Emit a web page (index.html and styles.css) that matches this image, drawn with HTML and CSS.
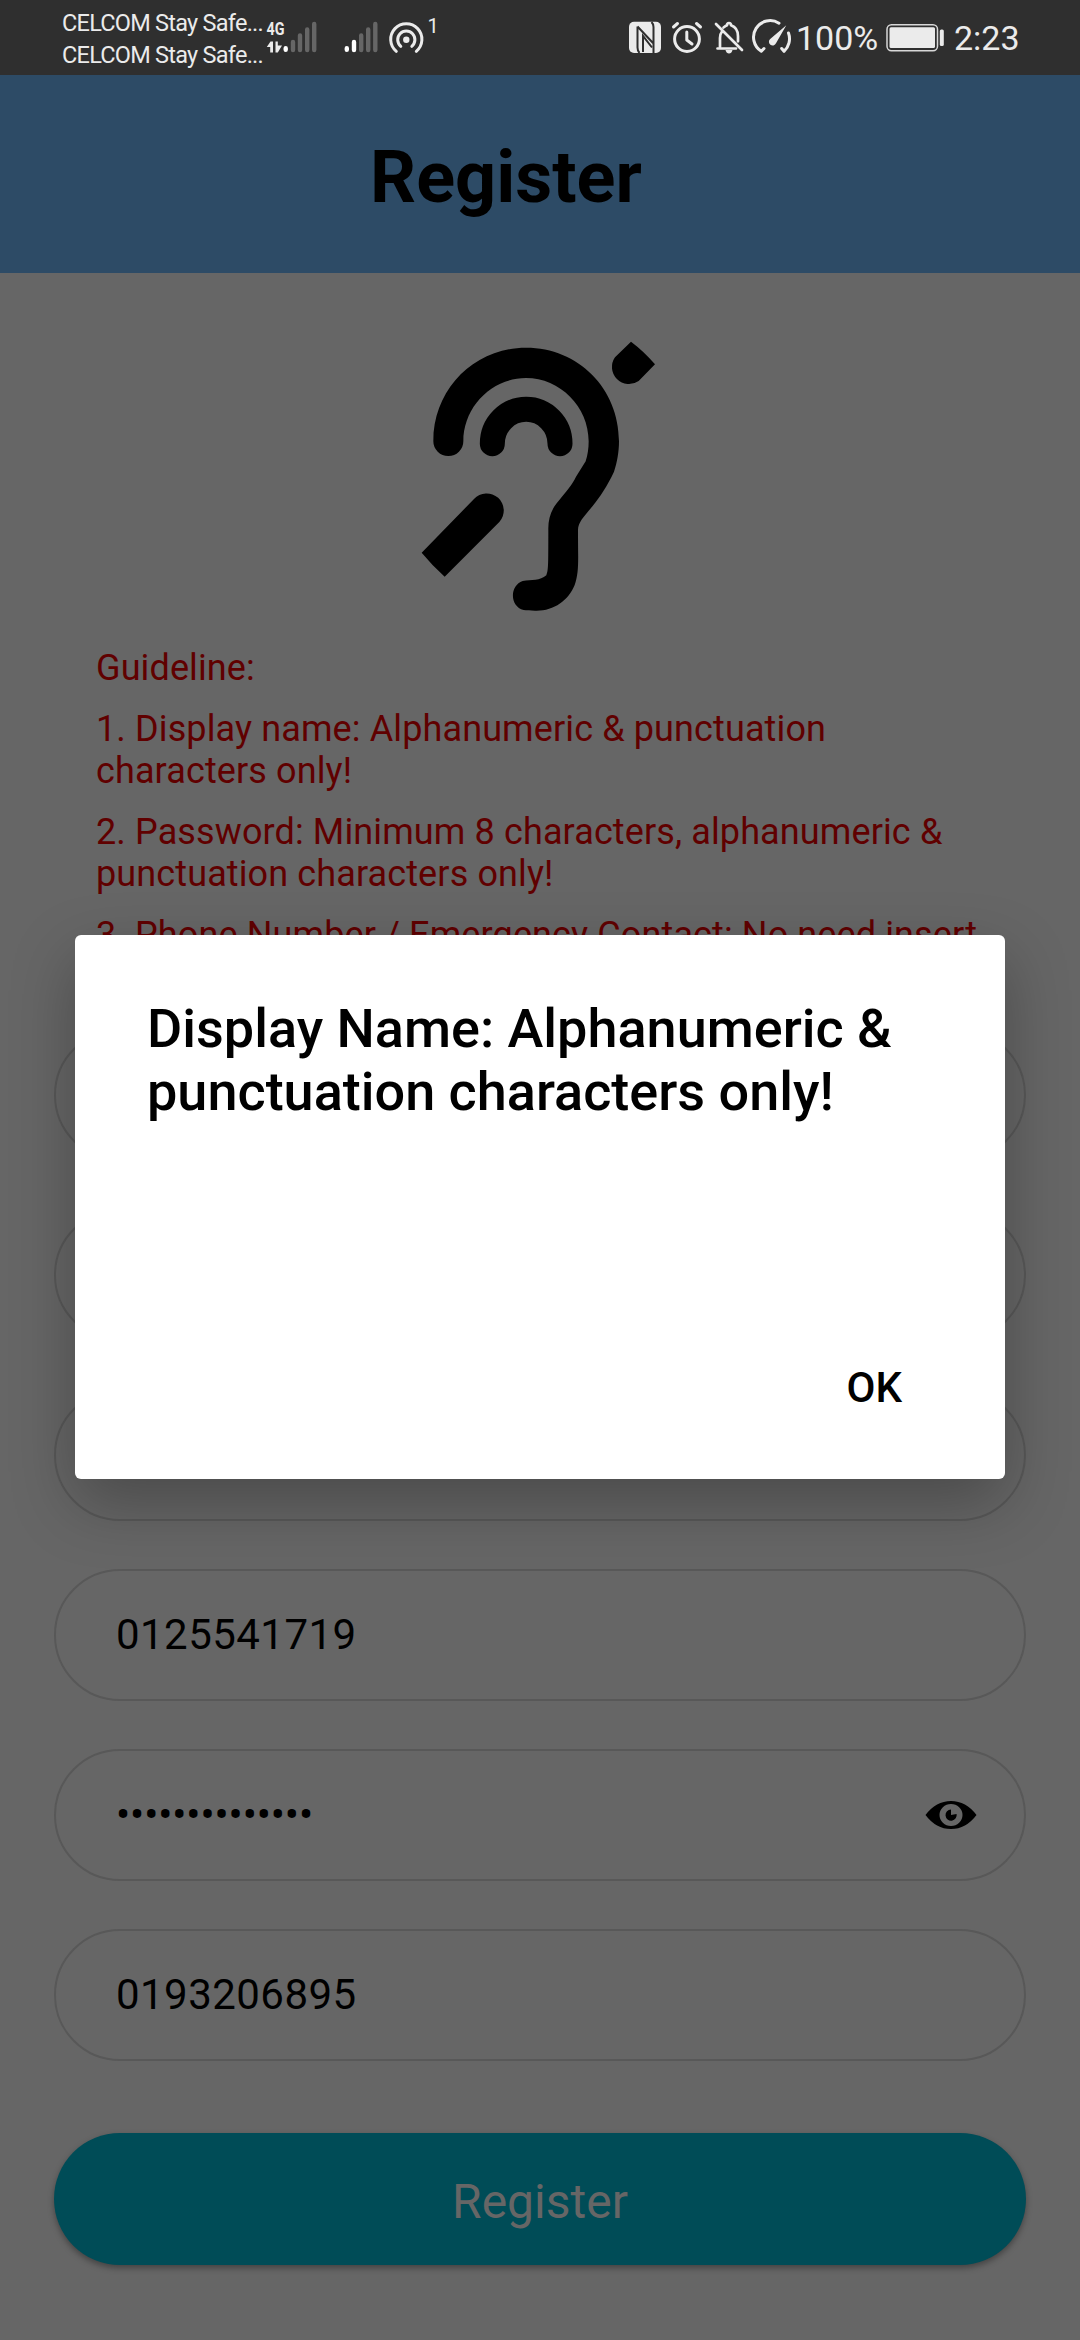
FILE: index.html
```html
<!DOCTYPE html>
<html lang="en">
<head>
<meta charset="utf-8">
<title>Register</title>
<link rel="stylesheet" href="styles.css">
</head>
<body>
<div class="screen">
  <div class="status">
    <div class="carriers"><div>CELCOM Stay Safe...</div><div>CELCOM Stay Safe...</div></div>
    <svg class="signals" width="180" height="75" viewBox="264 0 180 75">
      <text x="266.5" y="35.300" class="net" textLength="18" lengthAdjust="spacingAndGlyphs">4G</text>
      <path class="fill" d="M270.500 41.500h2.500v11h-2.800v-5.500h-3.400zM275.500 41.500h2.300v4h4.200l-4.200 7h-2.300z"/>
      <g class="bar"><path d="M285.700 48.200v1.600M346.800 48.200v1.600M354 42v8"/></g>
      <g class="bar dim"><path d="M293 42v8M300 35.500v14.500M307.200 29.500v20.500M314.200 24v26M361.200 35.500v14.500M368.200 29.500v20.500M375.300 24v26"/></g>
      <circle class="fill" cx="406.300" cy="39.700" r="3.200"/>
      <path class="line" d="M396.300 51.300a15.600 15.600 0 1 1 20 0M400.800 46.300a8.600 8.600 0 1 1 11 0"/>
      <text x="427.500" y="33" class="one">1</text>
    </svg>
    <svg class="icons" width="167" height="75" viewBox="628 0 167 75">
      <rect class="fill" x="629" y="21.700" width="32" height="31.300" rx="5"/>
      <path d="M637.500 26.500v21q0 3.500 2 5.500M637.500 26.500l15.500 16.500M651.500 22q2 2 2 5v26" fill="none" stroke="#2f2f2f" stroke-width="2"/>
      <path d="M643 52v-16l9 11.500" fill="none" stroke="#2f2f2f" stroke-width="2"/>
      <circle class="line" cx="687" cy="39" r="12.400"/>
      <path class="line" d="M686.800 32v8l5.200 4M673.500 27l4-3.500M700.500 27l-4-3.500"/>
      <path class="line thin" d="M716 24l26 26M717.500 48.500h18.500M720 47v-9q0-4 2-6.500M723.500 27.500q2-1.500 3.500-2.200 0-2.300 2-2.300t2 2.300q7 2.400 7 11v5"/>
      <path class="fill" d="M725.500 50h7q-1 3.500-3.500 3.500t-3.500-3.500z"/>
      <path class="line" d="M764 48.500l-2.700 2.800A16.600 16.600 0 0 1 779 23.200M788.500 33a17 17 0 0 1-4.500 18.300l-2.300-2.800"/>
      <path class="fill" d="M786.300 25.300l-10.300 18a3.700 3.700 0 1 1-5.800-4.300z"/>
    </svg>
    <div class="pct">100%</div>
    <svg class="battery" width="60" height="75" viewBox="885 0 60 75">
      <rect x="887" y="24.700" width="50.500" height="26" rx="4.500" fill="none" stroke="#d8d8d8" stroke-width="1.500"/>
      <rect class="fill" x="889.500" y="27.300" width="45.500" height="20.800" rx="1.500"/>
      <rect class="fill" x="939.800" y="29.500" width="4" height="16.500" rx="1.500"/>
    </svg>
    <div class="time">2:23</div>
  </div>
  <div class="header"><h1>Register</h1></div>
  <div class="content">
    <svg class="logo" width="280" height="310" viewBox="0 0 840 930">
      <path d="M100 364C100 205 225 83 378 83C535 83 657 205 657 364C657 395 651 430 642 455C622 498 600 530 578 558C555 587 534 605 534 630C534 720 538 755 524 795C505 842 460 874 405 872C392 872 378 871 371 870C327 858 330 796 368 783C395 779 420 783 439 766C445 750 445 740 445 630C444 600 452 572 470 550C500 513 518 492 528 470L557 424C563 405 566 385 566 364C566 260 480 174 378 174C275 174 190 260 190 364A45 44 0 0 1 100 364Z"/>
      <path d="M277 371A101.500 103 0 0 1 480 371" fill="none" stroke="#000" stroke-width="75" stroke-linecap="round"/>
      <path d="M65 698L222 537A51 51 0 0 1 298 606L134 770Q98 738 65 698Z"/>
      <path d="M693 65Q733 95 765 133L716 183A51 51 0 0 1 645 112Z"/>
    </svg>
    <div class="guide">
      <p>Guideline:</p>
      <p>1. Display name: Alphanumeric &amp; punctuation<br>characters only!</p>
      <p>2. Password: Minimum 8 characters, alphanumeric &amp;<br>punctuation characters only!</p>
      <p>3. Phone Number / Emergency Contact: No need insert</p>
    </div>
    <div class="form">
      <div class="field"></div>
      <div class="field"></div>
      <div class="field"></div>
      <div class="field">0125541719</div>
      <div class="field">
        <span class="dots">••••••••••••••</span>
        <svg class="eye" width="52" height="28" viewBox="0 0 52 28">
          <path fill-rule="evenodd" d="M.5 14Q11 0 26 0T51.500 14Q41 28 26 28T.5 14ZM14.500 14a11.500 11 0 1 0 23 0 11.500 11 0 1 0-23 0Z"/>
          <path d="M26 8.500v5.500l5.600-1A5.600 5.600 0 1 1 26 8.500Z"/>
        </svg>
      </div>
      <div class="field">0193206895</div>
    </div>
    <div class="submit">Register</div>
  </div>
  <div class="dialog">
    <h2>Display Name: Alphanumeric &amp;<br>punctuation characters only!</h2>
    <div class="actions"><span>OK</span></div>
  </div>
</div>
</body>
</html>
```
FILE: styles.css
```css
* { box-sizing: border-box; margin: 0; padding: 0; }
body { font-family: Roboto, "Liberation Sans", sans-serif; color: #000; background: #666; }
.screen { position: relative; width: 1080px; height: 2340px; overflow: hidden; background: #666; }

.status { display: flex; height: 75px; padding-left: 62px; background: #2f2f2f; color: #ebebeb; white-space: nowrap; }
.carriers { width: 202px; padding-top: 7px; font-size: 23.5px; line-height: 32px; letter-spacing: -.75px; }
.signals { flex: none; }
.icons { flex: none; margin-left: 184px; }
.pct { width: 90px; padding-left: 1px; line-height: 77px; font-size: 34px; }
.battery { flex: none; }
.time { margin-left: 9px; line-height: 77px; font-size: 34px; }
.net { font: bold 18px Roboto, sans-serif; fill: #ebebeb; }
.one { font: 20px Roboto, sans-serif; fill: #ebebeb; }
.fill { fill: #ebebeb; }
.line { fill: none; stroke: #ebebeb; stroke-width: 3; stroke-linecap: round; stroke-linejoin: round; }
.thin { stroke-width: 2.7; }
.bar { stroke: #fff; stroke-width: 4.4; stroke-linecap: round; }
.dim { stroke: #666; }

.header { height: 198px; padding: 4px 0 0 370px; background: #2d4b66; }
.header h1 { font-size: 72px; font-weight: 700; line-height: 198px; }

.content { display: flex; flex-direction: column; }
.logo { margin: 47px 0 0 400px; }
.guide { display: flex; flex-direction: column; gap: 19px; height: 382px; margin-top: 17px; padding-left: 96px; overflow: hidden; color: #600000; font-size: 36px; line-height: 42px; letter-spacing: .12px; white-space: nowrap; }
.form { display: flex; flex-direction: column; gap: 48px; padding: 0 54px; }
.field { display: flex; align-items: center; justify-content: space-between; height: 132px; padding: 0 47px 2px 60px; border: 2px solid #585858; border-radius: 66px; font-size: 42px; letter-spacing: .45px; }
.dots { letter-spacing: -.1px; }
.eye { position: relative; top: 1px; }
.submit { height: 132px; margin: 72px 54px 0; border-radius: 66px; background: #004c57; color: #666; font-size: 48px; line-height: 138px; text-align: center; box-shadow: 0 3px 6px rgba(0, 0, 0, .35); }

.dialog { position: absolute; left: 75px; top: 935px; width: 930px; height: 544px; padding: 62px 72px 61px; display: flex; flex-direction: column; justify-content: space-between; border-radius: 6px; background: #fff; box-shadow: 0 24px 64px rgba(0, 0, 0, .28); }
.dialog h2 { font-size: 54px; font-weight: 500; line-height: 63px; }
.actions { display: flex; justify-content: flex-end; padding-right: 31px; font-size: 42px; font-weight: 500; line-height: 60px; }
```
